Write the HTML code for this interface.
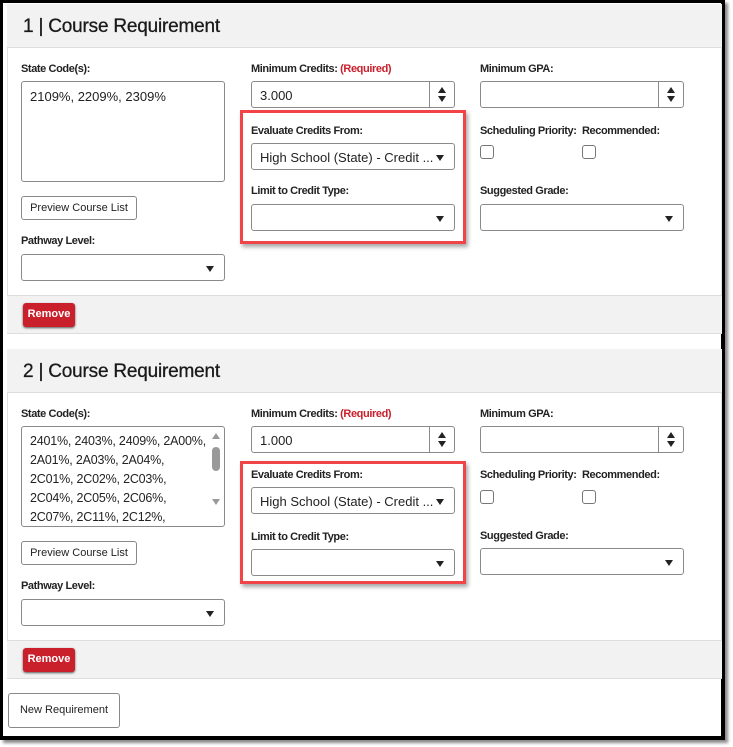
<!DOCTYPE html>
<html><head><meta charset="utf-8"><style>
*{box-sizing:border-box;margin:0;padding:0}
body{width:733px;height:747px;background:#fff;position:relative;overflow:hidden;font-family:"Liberation Sans",sans-serif;color:#222}
.frame{position:absolute;left:0;top:0;width:725px;height:740px;border:3px solid #000;border-right-width:4px;border-bottom-width:4px;box-shadow:3px 3px 3px #888;background:#fff}
.a{position:absolute}
.panel{position:absolute;left:7px;width:715px;border:1px solid #e2e2e2;background:#fff}
.hdr{position:absolute;left:7px;width:715px;background:#f2f2f2;border-bottom:1px solid #ddd}
.hdr span{position:absolute;left:16px;top:12px;font-size:19px;color:#1a1a1a;letter-spacing:-0.2px;-webkit-text-stroke:0.3px #1a1a1a}
.ftr{position:absolute;left:7px;width:715px;background:#f2f2f2;border-top:1px solid #ddd;border-bottom:1px solid #ddd}
.lbl{position:absolute;font-size:11px;font-weight:bold;color:#222;letter-spacing:-0.4px}
.lbl i{font-style:normal;color:#c8202c}
.box{position:absolute;border:1px solid #8a8a8a;border-radius:3px;background:#fff;font-size:13px;color:#222}
.sel::after{content:"";position:absolute;right:10px;top:11px;border-left:4px solid transparent;border-right:4px solid transparent;border-top:6px solid #222}
.spin{position:absolute;right:0;top:0;bottom:0;width:25px;border-left:1px solid #8a8a8a}
.spin::before{content:"";position:absolute;left:8px;top:5px;border-left:4px solid transparent;border-right:4px solid transparent;border-bottom:6px solid #222}
.spin::after{content:"";position:absolute;left:8px;bottom:5px;border-left:4px solid transparent;border-right:4px solid transparent;border-top:6px solid #222}
.btn{position:absolute;border:1px solid #888;border-radius:3px;background:#fff;font-size:11px;text-align:center;color:#222}
.rm{position:absolute;background:#c9202b;color:#fff;font-size:11px;font-weight:bold;border-radius:3px;text-align:center;line-height:23px;box-shadow:0 1px 2px #555}
.red{position:absolute;border:3px solid #f04448;box-shadow:2px 3px 4px rgba(0,0,0,.35)}
.cb{position:absolute;width:14px;height:14px;border:1px solid #777;border-radius:3px;background:#fff}
.ta{line-height:19px;padding:5px 8px}
</style></head><body>
<div class="frame"></div>

<!-- section 1 -->
<div class="panel" style="top:4px;height:330px"></div>
<div class="hdr" style="top:4px;height:44px"><span>1 | Course Requirement</span></div>
<div class="lbl" style="left:21px;top:63px">State Code(s):</div>
<div class="box ta" style="left:21px;top:81px;width:204px;height:101px">2109%, 2209%, 2309%</div>
<div class="btn" style="left:21px;top:196px;width:116px;height:24px;line-height:22px">Preview Course List</div>
<div class="lbl" style="left:21px;top:235px">Pathway Level:</div>
<div class="box sel" style="left:21px;top:254px;width:204px;height:27px"></div>
<div class="ftr" style="top:295px;height:39px"></div>
<div class="rm" style="left:23px;top:303px;width:52px;height:24px">Remove</div>

<div class="lbl" style="left:251px;top:63px">Minimum Credits: <i>(Required)</i></div>
<div class="box" style="left:251px;top:81px;width:204px;height:27px;padding:6px 8px">3.000<div class="spin"></div></div>
<div class="red" style="left:240px;top:110px;width:226px;height:134px"></div>
<div class="lbl" style="left:251px;top:125px">Evaluate Credits From:</div>
<div class="box sel" style="left:251px;top:143px;width:204px;height:27px;padding:6px 8px">High School (State) - Credit ...</div>
<div class="lbl" style="left:251px;top:185px">Limit to Credit Type:</div>
<div class="box sel" style="left:251px;top:204px;width:204px;height:27px"></div>

<div class="lbl" style="left:480px;top:63px">Minimum GPA:</div>
<div class="box" style="left:480px;top:81px;width:204px;height:27px"><div class="spin"></div></div>
<div class="lbl" style="left:480px;top:125px">Scheduling Priority:</div>
<div class="lbl" style="left:582px;top:125px">Recommended:</div>
<div class="cb" style="left:480px;top:145px"></div>
<div class="cb" style="left:582px;top:145px"></div>
<div class="lbl" style="left:480px;top:185px">Suggested Grade:</div>
<div class="box sel" style="left:480px;top:204px;width:204px;height:27px"></div>

<!-- section 2 -->
<div class="panel" style="top:349px;height:330px"></div>
<div class="hdr" style="top:349px;height:44px"><span>2 | Course Requirement</span></div>
<div class="lbl" style="left:21px;top:408px">State Code(s):</div>
<div class="box ta" style="left:21px;top:426px;width:204px;height:101px;overflow:hidden;padding-right:4px;font-size:12.5px;letter-spacing:-0.2px">2401%, 2403%, 2409%, 2A00%,<br>2A01%, 2A03%, 2A04%,<br>2C01%, 2C02%, 2C03%,<br>2C04%, 2C05%, 2C06%,<br>2C07%, 2C11%, 2C12%,
<div class="a" style="right:4px;top:6px;border-left:4px solid transparent;border-right:4px solid transparent;border-bottom:6px solid #999"></div>
<div class="a" style="right:4px;top:20px;width:8px;height:24px;background:#999;border-radius:4px"></div>
<div class="a" style="right:4px;top:72px;border-left:4px solid transparent;border-right:4px solid transparent;border-top:6px solid #999"></div>
</div>
<div class="btn" style="left:21px;top:541px;width:116px;height:24px;line-height:22px">Preview Course List</div>
<div class="lbl" style="left:21px;top:580px">Pathway Level:</div>
<div class="box sel" style="left:21px;top:599px;width:204px;height:27px"></div>
<div class="ftr" style="top:640px;height:39px"></div>
<div class="rm" style="left:23px;top:648px;width:52px;height:24px">Remove</div>

<div class="lbl" style="left:251px;top:408px">Minimum Credits: <i>(Required)</i></div>
<div class="box" style="left:251px;top:426px;width:204px;height:27px;padding:6px 8px">1.000<div class="spin"></div></div>
<div class="red" style="left:240px;top:461px;width:226px;height:123px"></div>
<div class="lbl" style="left:251px;top:469px">Evaluate Credits From:</div>
<div class="box sel" style="left:251px;top:487px;width:204px;height:27px;padding:6px 8px">High School (State) - Credit ...</div>
<div class="lbl" style="left:251px;top:531px">Limit to Credit Type:</div>
<div class="box sel" style="left:251px;top:549px;width:204px;height:27px"></div>

<div class="lbl" style="left:480px;top:408px">Minimum GPA:</div>
<div class="box" style="left:480px;top:426px;width:204px;height:27px"><div class="spin"></div></div>
<div class="lbl" style="left:480px;top:469px">Scheduling Priority:</div>
<div class="lbl" style="left:582px;top:469px">Recommended:</div>
<div class="cb" style="left:480px;top:490px"></div>
<div class="cb" style="left:582px;top:490px"></div>
<div class="lbl" style="left:480px;top:530px">Suggested Grade:</div>
<div class="box sel" style="left:480px;top:548px;width:204px;height:27px"></div>

<div class="btn" style="left:8px;top:693px;width:112px;height:35px;line-height:33px">New Requirement</div>
</body></html>
